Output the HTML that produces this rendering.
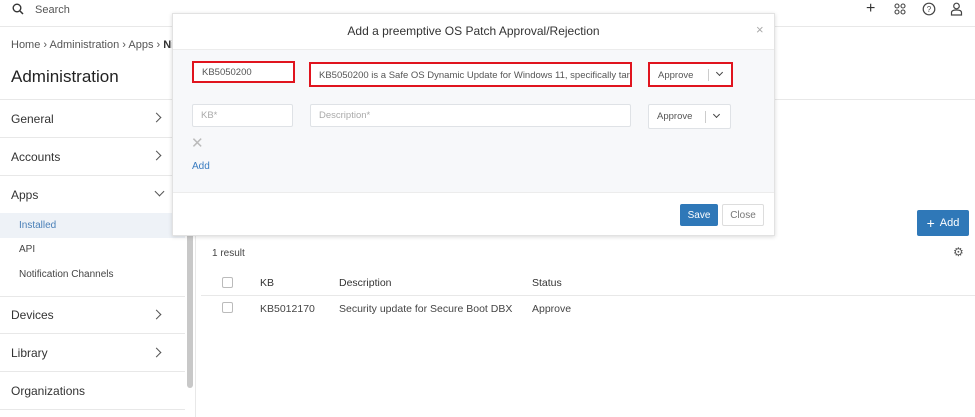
<!DOCTYPE html>
<html><head><style>
*{box-sizing:border-box;margin:0;padding:0}
body{width:975px;height:417px;overflow:hidden;background:#fff;font-family:"Liberation Sans",sans-serif;color:#333;position:relative;font-size:11px}
.a{position:absolute}
.hl{position:absolute;height:1px;background:#e8e8e8}
.chev{position:absolute;width:7px;height:7px;border-right:1.3px solid #555;border-bottom:1.3px solid #555}
.side{position:absolute;left:11px;font-size:12px;color:#333}
.inp{position:absolute;background:#fff;border:1px solid #dfe2e6;border-radius:2px;font-size:9.5px;color:#555;padding-left:8px;display:flex;align-items:center}
.red{border:2px solid #e0141e;border-radius:0}
.cb{position:absolute;width:11px;height:11px;border:1px solid #bbb;border-radius:2px}
</style></head><body>
<svg class="a" style="left:12px;top:3px" width="12" height="12" viewBox="0 0 12 12"><circle cx="5" cy="5" r="3.8" fill="none" stroke="#333" stroke-width="1.4"/><path d="M8 8l3 3" stroke="#333" stroke-width="1.5"/></svg>
<div class="a" style="left:35px;top:4px;font-size:11px;color:#555">Search</div>
<div class="hl" style="left:0;top:26px;width:975px"></div>
<div class="a" style="left:866px;top:0px;font-size:16px;color:#333">+</div>
<svg class="a" style="left:894px;top:3px" width="12" height="12"><g fill="none" stroke="#444" stroke-width="1.1"><circle cx="3" cy="3" r="2"/><circle cx="9" cy="3" r="2"/><circle cx="3" cy="9" r="2"/><circle cx="9" cy="9" r="2"/></g></svg>
<svg class="a" style="left:922px;top:2px" width="14" height="14"><circle cx="7" cy="7" r="5.8" fill="none" stroke="#444" stroke-width="1.2"/><text x="7" y="10" font-size="8" text-anchor="middle" fill="#444" font-family="Liberation Sans">?</text></svg>
<svg class="a" style="left:950px;top:2px" width="13" height="14"><circle cx="6.5" cy="4" r="2.8" fill="none" stroke="#444" stroke-width="1.2"/><path d="M1.5 13v-2.5q0-2.5 5-2.5t5 2.5V13z" fill="none" stroke="#444" stroke-width="1.2"/></svg>
<div class="a" style="left:11px;top:39px;font-size:11px;color:#555">Home › Administration › Apps › <b style="color:#333">Ninja</b></div>
<div class="a" style="left:11px;top:67px;font-size:17px;color:#222">Administration</div>
<div class="hl" style="left:0;top:99px;width:185px"></div>
<div class="side" style="top:112px">General</div><div class="chev" style="left:153px;top:114px;transform:rotate(-45deg)"></div>
<div class="hl" style="left:0;top:137px;width:185px"></div>
<div class="side" style="top:150px">Accounts</div><div class="chev" style="left:153px;top:152px;transform:rotate(-45deg)"></div>
<div class="hl" style="left:0;top:175px;width:185px"></div>
<div class="side" style="top:188px">Apps</div><div class="chev" style="left:156px;top:188px;transform:rotate(45deg)"></div>
<div class="a" style="left:0;top:213px;width:185px;height:25px;background:#eef2f7"></div>
<div class="a" style="left:19px;top:220px;font-size:10px;color:#4a80b8">Installed</div>
<div class="a" style="left:19px;top:244px;font-size:10px;color:#444">API</div>
<div class="a" style="left:19px;top:269px;font-size:10px;color:#444">Notification Channels</div>
<div class="hl" style="left:0;top:296px;width:185px"></div>
<div class="side" style="top:308px">Devices</div><div class="chev" style="left:153px;top:311px;transform:rotate(-45deg)"></div>
<div class="hl" style="left:0;top:333px;width:185px"></div>
<div class="side" style="top:346px">Library</div><div class="chev" style="left:153px;top:349px;transform:rotate(-45deg)"></div>
<div class="hl" style="left:0;top:371px;width:185px"></div>
<div class="side" style="top:384px">Organizations</div>
<div class="hl" style="left:0;top:409px;width:185px"></div>
<div class="a" style="left:187px;top:230px;width:6px;height:158px;background:#c8c8c8;border-radius:3px"></div>
<div class="a" style="left:195px;top:26px;width:1px;height:391px;background:#e8e8e8"></div>
<div class="hl" style="left:196px;top:99px;width:779px"></div>
<div class="a" style="left:917px;top:210px;width:52px;height:26px;background:#2f78b8;border-radius:2px;color:#fff;font-size:11px;display:flex;align-items:center;justify-content:center"><span style="font-size:14px;margin-right:5px">+</span>Add</div>
<div class="a" style="left:212px;top:248px;font-size:10px;color:#444">1 result</div>
<div class="a" style="left:953px;top:245px;font-size:12px;color:#555">⚙</div>
<div class="cb" style="left:222px;top:277px"></div>
<div class="a" style="left:260px;top:277px;font-size:10.5px;color:#333">KB</div>
<div class="a" style="left:339px;top:277px;font-size:10.5px;color:#333">Description</div>
<div class="a" style="left:532px;top:277px;font-size:10.5px;color:#333">Status</div>
<div class="hl" style="left:201px;top:295px;width:774px"></div>
<div class="cb" style="left:222px;top:302px"></div>
<div class="a" style="left:260px;top:303px;font-size:10.5px;color:#444">KB5012170</div>
<div class="a" style="left:339px;top:303px;font-size:10.5px;color:#444">Security update for Secure Boot DBX</div>
<div class="a" style="left:532px;top:303px;font-size:10.5px;color:#444">Approve</div>
<div class="a" style="left:172px;top:13px;width:603px;height:223px;background:#fff;border:1px solid #e2e2e2;box-shadow:0 1px 4px rgba(0,0,0,.15)">
 <div class="a" style="left:0;top:0;width:601px;height:35px;text-align:center;line-height:34px;font-size:12px;color:#333">Add a preemptive OS Patch Approval/Rejection</div>
 <div class="a" style="left:583px;top:8px;font-size:13px;color:#aaa">×</div>
 <div class="a" style="left:0;top:35px;width:601px;height:144px;background:#f7f8fa;border-top:1px solid #ececec;border-bottom:1px solid #ececec"></div>
</div>
<div class="inp red" style="left:192px;top:61px;width:103px;height:22px;padding-top:1px">KB5050200</div>
<div class="inp red" style="left:309px;top:62px;width:323px;height:25px;white-space:nowrap;overflow:hidden;padding-top:1px">KB5050200 is a Safe OS Dynamic Update for Windows 11, specifically targ</div>
<div class="inp red" style="left:648px;top:62px;width:85px;height:25px;padding-top:1px">Approve<span style="position:absolute;left:58px;top:5px;width:1px;height:12px;background:#ccc"></span><span class="chev" style="left:67px;top:6px;width:5px;height:5px;transform:rotate(45deg);border-color:#444"></span></div>
<div class="inp" style="left:192px;top:104px;width:101px;height:23px;color:#aaa">KB*</div>
<div class="inp" style="left:310px;top:104px;width:321px;height:23px;color:#aaa">Description*</div>
<div class="inp" style="left:648px;top:104px;width:83px;height:25px">Approve<span style="position:absolute;left:56px;top:6px;width:1px;height:12px;background:#ccc"></span><span class="chev" style="left:65px;top:7px;width:5px;height:5px;transform:rotate(45deg);border-color:#444"></span></div>
<div class="a" style="left:191px;top:134px;font-size:15px;color:#bbb">✕</div>
<div class="a" style="left:192px;top:161px;font-size:10px;color:#3a7cc0">Add</div>
<div class="a" style="left:680px;top:204px;width:38px;height:22px;background:#2f78b8;color:#fff;font-size:10px;display:flex;align-items:center;justify-content:center;border-radius:2px">Save</div>
<div class="a" style="left:722px;top:204px;width:42px;height:22px;background:#fff;border:1px solid #ddd;color:#777;font-size:10px;display:flex;align-items:center;justify-content:center;border-radius:2px">Close</div>
</body></html>
